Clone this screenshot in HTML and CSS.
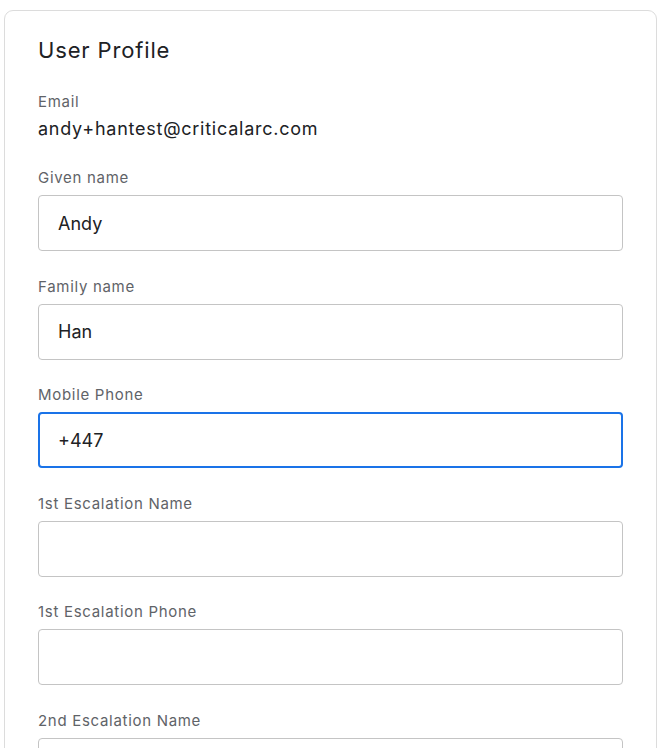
FILE: index.html
```html
<!DOCTYPE html>
<html>
<head>
<meta charset="utf-8">
<link rel="stylesheet" href="styles.css">
</head>
<body>
<div class="card">
  <h1 class="title">User Profile</h1>
  <div class="field">
    <div class="label">Email</div>
    <div class="value">andy+hantest@criticalarc.com</div>
  </div>
  <div class="group">
    <div class="label">Given name</div>
    <div class="input">Andy</div>
  </div>
  <div class="group">
    <div class="label">Family name</div>
    <div class="input">Han</div>
  </div>
  <div class="group">
    <div class="label">Mobile Phone</div>
    <div class="input focused">+447</div>
  </div>
  <div class="group">
    <div class="label">1st Escalation Name</div>
    <div class="input"></div>
  </div>
  <div class="group">
    <div class="label">1st Escalation Phone</div>
    <div class="input"></div>
  </div>
  <div class="group">
    <div class="label">2nd Escalation Name</div>
    <div class="input"></div>
  </div>
</div>
</body>
</html>
```
FILE: styles.css
```css
html, body {
  margin: 0;
  padding: 0;
  background: #ffffff;
  font-family: Inter, Roboto, "Liberation Sans", sans-serif;
  color: #202124;
}
.card {
  margin: 10px 6px 0 4px;
  border: 1px solid #dcdcdc;
  border-radius: 9px;
  padding: 24px 33px 0 33px;
  height: 800px;
}
.title {
  margin: 0 0 27px 0;
  font-size: 22px;
  font-weight: 400;
  line-height: 30px;
  letter-spacing: 0.85px;
}
.label {
  font-size: 15px;
  line-height: 20px;
  color: #5f6368;
  margin-bottom: 7px;
  letter-spacing: 0.7px;
}
.field .label {
  margin-bottom: 6px;
}
.value {
  font-size: 18px;
  line-height: 22px;
  letter-spacing: 0.75px;
}
.field {
  margin-bottom: 28px;
}
.group {
  margin-bottom: 25.6px;
}
.input {
  box-sizing: border-box;
  height: 56px;
  border: 1px solid #c4c4c4;
  border-radius: 4px;
  padding: 0 19px;
  display: flex;
  align-items: center;
  font-size: 18px;
}
.input.focused {
  border: 2px solid #1a73e8;
  padding: 0 18px;
}
```
